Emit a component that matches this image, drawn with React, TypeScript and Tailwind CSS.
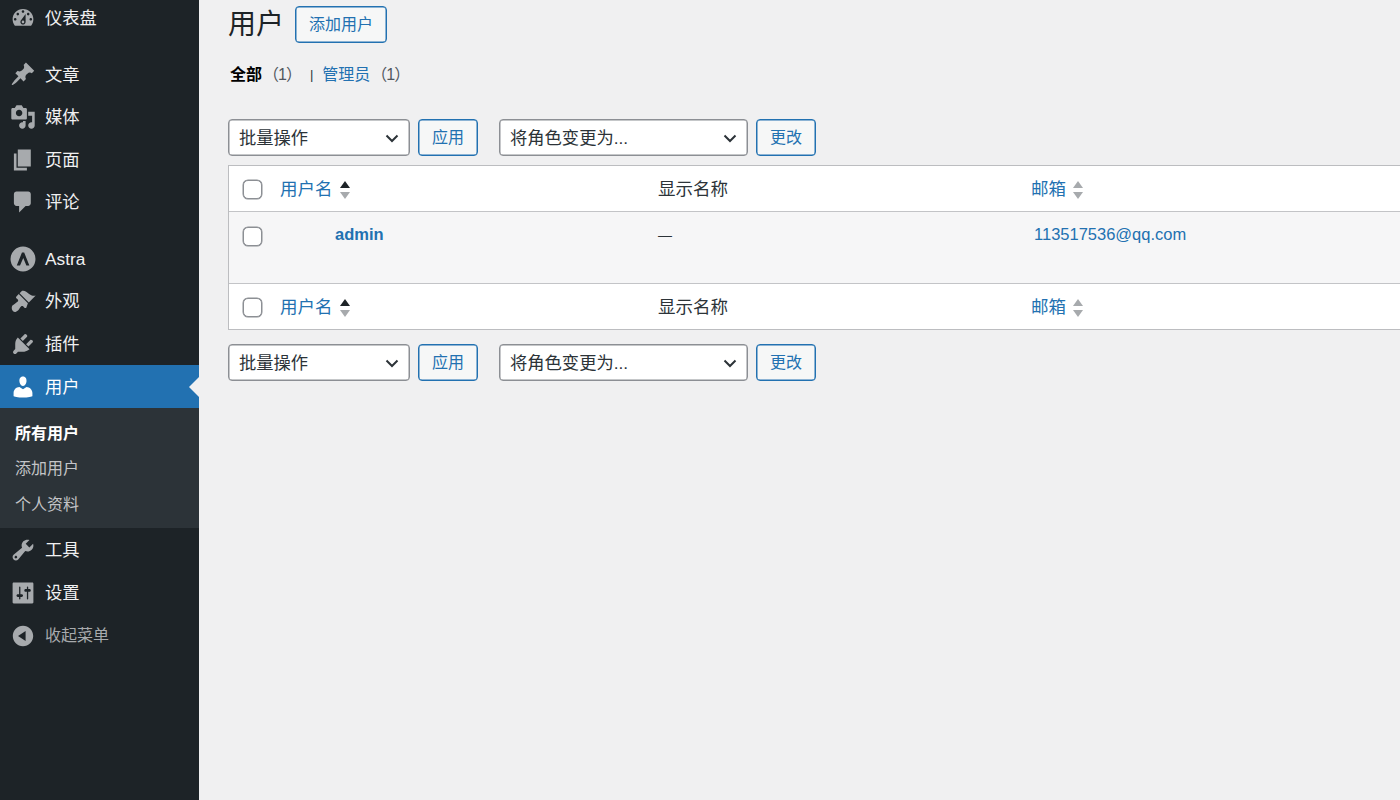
const font = { fontFamily: '"Liberation Sans", "Noto Sans CJK SC", sans-serif' };

const icons: Record<string, string> = {
  dashboard:
    'M3.76 16h12.48c1.1-1.37 1.76-3.11 1.76-5 0-4.42-3.58-8-8-8s-8 3.58-8 8c0 1.89.66 3.63 1.76 5zM10 4c.55 0 1 .45 1 1s-.45 1-1 1-1-.45-1-1 .45-1 1-1zM6 6c.55 0 1 .45 1 1s-.45 1-1 1-1-.45-1-1 .45-1 1-1zm8 0c.55 0 1 .45 1 1s-.45 1-1 1-1-.45-1-1 .45-1 1-1zm-5.37 5.55L12 7v6c0 1.1-.9 2-2 2s-2-.9-2-2c0-.57.24-1.08.63-1.45zM4 10c.55 0 1 .45 1 1s-.45 1-1 1-1-.45-1-1 .45-1 1-1zm12 0c.55 0 1 .45 1 1s-.45 1-1 1-1-.45-1-1 .45-1 1-1zm-5 3c0-.55-.45-1-1-1s-1 .45-1 1 .45 1 1 1 1-.45 1-1z',
  post: 'M10.44 3.02l1.82-1.82 6.36 6.35-1.83 1.82c-1.05-.68-2.48-.57-3.41.36l-.75.75c-.92.93-1.04 2.35-.35 3.41l-1.83 1.82-2.41-2.41-2.8 2.79c-.42.42-3.38 2.71-3.8 2.29s1.86-3.39 2.28-3.81l2.79-2.79L4.1 9.36l1.83-1.82c1.05.69 2.48.57 3.4-.36l.75-.75c.93-.92 1.05-2.35.36-3.41z',
  media:
    'M13 11V4c0-.55-.45-1-1-1h-1.67L9 1H5L3.67 3H2c-.55 0-1 .45-1 1v7c0 .55.45 1 1 1h10c.55 0 1-.45 1-1zM7 4.5c1.38 0 2.5 1.12 2.5 2.5S8.38 9.5 7 9.5 4.5 8.38 4.5 7 5.62 4.5 7 4.5zM14 6h5v10.5c0 1.38-1.12 2.5-2.5 2.5S14 17.88 14 16.5s1.12-2.5 2.5-2.5c.17 0 .34.02.5.05V9h-3V6zm-4 8.05V13h2v3.5c0 1.38-1.12 2.5-2.5 2.5S7 17.88 7 16.5 8.12 14 9.5 14c.17 0 .34.02.5.05z',
  page: 'M6 15V2h10v13H6zm-1 1h8v2H3V5h2v11z',
  comments: 'M5 2h9c1.1 0 2 .9 2 2v7c0 1.1-.9 2-2 2h-2l-5 5v-5H5c-1.1 0-2-.9-2-2V4c0-1.1.9-2 2-2z',
  astra:
    'M10 .4a9.6 9.6 0 1 0 0 19.2A9.6 9.6 0 0 0 10 .4zM9.200 5h1.700l4 10h-2.300L10.200 9.300 7.700 15H5.200z',
  appearance:
    'M14.48 11.06L7.41 3.99l1.5-1.5c.5-.56 2.3-.47 3.51.32 1.21.8 1.43 1.28 2.91 2.1 1.18.64 2.45 1.26 4.45.85zm-.71.71L6.7 4.7 4.93 6.47c-.39.39-.39 1.02 0 1.41l1.06 1.06c.39.39.39 1.03 0 1.42-.6.6-1.43 1.11-2.21 1.69-.35.26-.7.53-1.01.84C1.43 13.23.91 15.24 1.84 17.18c.92 1.94 2.95 1.44 4.26.12.31-.31.58-.66.84-1.01.58-.78 1.09-1.61 1.69-2.21.39-.39 1.03-.39 1.42 0l1.06 1.06c.39.39 1.02.39 1.41 0z',
  plugins:
    'M13.11 4.36L9.87 7.6 8 5.73l3.24-3.24c.35-.34 1.05-.2 1.56.32.52.51.66 1.21.31 1.55zm-8 1.77l.91-1.12 9.01 9.01-1.19.84c-.71.71-2.63 1.16-3.82 1.16H6.14L4.9 17.26c-.59.59-1.54.59-2.12 0-.59-.58-.59-1.53 0-2.12l1.24-1.24v-3.88c0-1.13.4-3.19 1.09-3.89zm7.26 3.97l3.24-3.24c.34-.35 1.04-.21 1.55.31.52.51.66 1.21.31 1.55l-3.24 3.25z',
  users:
    'M10 9.25c-2.27 0-2.73-3.44-2.73-3.44C7 4.02 7.82 2 9.97 2c2.16 0 2.98 2.02 2.71 3.81 0 0-.41 3.44-2.68 3.44zm0 2.57L12.72 10c2.39 0 4.52 2.33 4.52 4.53v2.49s-3.65 1.13-7.24 1.13c-3.65 0-7.24-1.13-7.24-1.13v-2.49c0-2.25 1.94-4.48 4.47-4.48z',
  tools:
    'M16.68 9.77c-1.34 1.34-3.3 1.67-4.95.99l-5.41 6.52c-.99.99-2.59.99-3.58 0s-.99-2.59 0-3.57l6.52-5.42c-.68-1.65-.35-3.61.99-4.95 1.28-1.28 3.12-1.62 4.72-1.06l-2.89 2.89 2.82 2.82 2.86-2.87c.53 1.58.18 3.39-1.08 4.65zM3.81 16.21c.4.39 1.04.39 1.43 0 .4-.4.4-1.04 0-1.43-.39-.4-1.03-.4-1.43 0-.39.39-.39 1.03 0 1.43z',
  settings:
    'M18 17.2V2.8c0-.4-.4-.8-.8-.8H2.800c-.4 0-.8.4-.8.8v14.400c0 .4.4.8.8.8h14.400c.4 0 .8-.4.8-.8zM8 11h1c.55 0 1 .45 1 1s-.45 1-1 1H8v1.500c0 .28-.22.5-.5.5s-.5-.22-.5-.5V13H6c-.55 0-1-.45-1-1s.45-1 1-1h1V5.500c0-.28.22-.5.5-.5s.5.22.5.5V11zm5-2h-1c-.55 0-1-.45-1-1s.45-1 1-1h1V5.500c0-.28.22-.5.5-.5s.5.22.5.5V7h1c.55 0 1 .45 1 1s-.45 1-1 1h-1v5.500c0 .28-.22.5-.5.5s-.5-.22-.5-.5V9z',
  collapse:
    'M10 2.16c4.33 0 7.84 3.51 7.84 7.84s-3.51 7.84-7.84 7.84S2.16 14.33 2.16 10 5.67 2.16 10 2.16zm2 11.72V6.12L6.18 9.97z',
};

function MenuIcon({ name, className }: { name: string; className?: string }) {
  return (
    <svg viewBox="0 0 20 20" className={`h-[26px] w-[26px] shrink-0 ${className ?? 'text-[#a7aaad]'}`}>
      <path fill="currentColor" fillRule="evenodd" d={icons[name]} />
    </svg>
  );
}

function MenuItem({ icon, label, active }: { icon: string; label: string; active?: boolean }) {
  return (
    <div
      className={`relative flex h-[42.67px] items-center pl-[10px] text-[17.3px] ${
        active ? 'bg-[#2271b1] text-white' : 'text-[#f0f0f1]'
      }`}
    >
      <MenuIcon name={icon} className={active ? 'text-white' : 'text-[#a7aaad]'} />
      <span className="ml-[9px] pt-[2px]">{label}</span>
      {active && (
        <span className="absolute right-0 top-1/2 -mt-[10px] border-y-[10px] border-r-[10px] border-y-transparent border-r-[#f0f0f1]" />
      )}
    </div>
  );
}

function Sidebar() {
  return (
    <aside className="w-[199px] shrink-0 bg-[#1d2327]">
      <div className="-mt-[3px]">
        <MenuItem icon="dashboard" label="仪表盘" />
      </div>
      <div className="mt-[13.5px]">
        <MenuItem icon="post" label="文章" />
        <MenuItem icon="media" label="媒体" />
        <MenuItem icon="page" label="页面" />
        <MenuItem icon="comments" label="评论" />
      </div>
      <div className="mt-[13.5px]">
        <MenuItem icon="astra" label="Astra" />
        <MenuItem icon="appearance" label="外观" />
        <MenuItem icon="plugins" label="插件" />
        <MenuItem icon="users" label="用户" active />
      </div>
      <div className="flex h-[120px] flex-col justify-center gap-[12px] bg-[#2c3338] pl-[15px] pt-[2px] text-[16px] leading-[23.5px] text-[#c3c4c7]">
        <div className="font-bold text-white">所有用户</div>
        <div>添加用户</div>
        <div>个人资料</div>
      </div>
      <div className="mt-[1px]">
        <MenuItem icon="tools" label="工具" />
        <MenuItem icon="settings" label="设置" />
        <div className="flex h-[42.67px] items-center pl-[10px] text-[16px] text-[#a7aaad]">
          <MenuIcon name="collapse" />
          <span className="ml-[9px]">收起菜单</span>
        </div>
      </div>
    </aside>
  );
}

function BlueButton({ label, wide }: { label: string; wide?: boolean }) {
  return (
    <div
      className={`flex h-[37px] items-center justify-center rounded-[4px] border border-[#2271b1] bg-[#f6f7f7] pt-[1px] text-[16px] text-[#2271b1] shadow-[inset_0_0_0_0.5px_#2271b1] ${
        wide ? 'w-[92px]' : 'w-[60px]'
      }`}
    >
      {label}
    </div>
  );
}

function Select({ label, width }: { label: string; width: string }) {
  return (
    <div
      className={`flex h-[37px] items-center justify-between rounded-[4px] border border-[#8c8f94] bg-white pl-[10px] pr-[9px] text-[17.3px] text-[#2c3338] shadow-[inset_0_0_0_0.5px_#8c8f94] ${width}`}
    >
      <span className="pt-[2px]">{label}</span>
      <svg viewBox="0 0 16 16" className="h-[16px] w-[16px]" fill="none" stroke="#2c3338" strokeWidth="2">
        <path d="M2.5 5.500 8 11l5.500-5.500" />
      </svg>
    </div>
  );
}

function Toolbar() {
  return (
    <div className="flex items-center">
      <Select label="批量操作" width="w-[182px]" />
      <div className="ml-[8px]">
        <BlueButton label="应用" />
      </div>
      <div className="ml-[21px]">
        <Select label="将角色变更为..." width="w-[249px]" />
      </div>
      <div className="ml-[8px]">
        <BlueButton label="更改" />
      </div>
    </div>
  );
}

function Checkbox() {
  return (
    <span className="ml-[1px] block h-[19px] w-[19px] rounded-[5px] border border-[#8c8f94] bg-white shadow-[0_0_0_0.5px_#8c8f94]" />
  );
}

function SortArrows({ sorted }: { sorted?: boolean }) {
  return (
    <svg viewBox="0 0 12 20" className="ml-[6px] h-[20px] w-[12px]">
      <path d="M6 1l5 7H1z" fill={sorted ? '#1d2327' : '#a7aaad'} />
      <path d="M6 19l5-7H1z" fill="#a7aaad" />
    </svg>
  );
}

function HeadRow({ borderClass }: { borderClass: string }) {
  return (
    <div className={`grid h-[46px] grid-cols-[51px_378px_373px_1fr] items-center bg-white pt-[2px] text-[17.5px] ${borderClass}`}>
      <div className="pl-[13px]">
        <Checkbox />
      </div>
      <div className="flex items-center text-[#2271b1]">
        用户名
        <SortArrows sorted />
      </div>
      <div className="text-[#2c3338]">显示名称</div>
      <div className="flex items-center text-[#2271b1]">
        邮箱
        <SortArrows />
      </div>
    </div>
  );
}

export default function App() {
  return (
    <div className="flex h-[800px] w-[1400px] overflow-hidden bg-[#f0f0f1] text-[16.5px]" style={font}>
      <Sidebar />
      <main className="flex-1 pl-[29px]">
        <div className="flex items-center pt-[6px]">
          <h1 className="text-[28px] font-normal leading-[37px] text-[#1d2327]">用户</h1>
          <div className="ml-[11px]">
            <BlueButton label="添加用户" wide />
          </div>
        </div>

        <div className="mt-[20px] flex h-[24px] items-center text-[16px] text-[#50575e]">
          <span className="ml-[2px] font-bold text-black">全部</span>
          <span className="ml-[1px] tracking-[-1px]">（1）</span>
          <span className="ml-[9px] text-[13px] text-[#2c3338]">|</span>
          <span className="ml-[9px] text-[#2271b1]">管理员</span>
          <span className="ml-[1px] tracking-[-1px]">（1）</span>
        </div>

        <div className="mt-[32px]">
          <Toolbar />
        </div>

        <div className="mt-[9px] w-[1190px] border border-[#bcbdc0]">
          <HeadRow borderClass="border-b border-[#c3c4c7]" />
          <div className="grid h-[71px] grid-cols-[51px_378px_373px_1fr] bg-[#f6f6f7] pt-[12px] leading-[20px]">
            <div className="pl-[13px] pt-[3px]">
              <Checkbox />
            </div>
            <div className="pl-[55px] font-bold text-[#2271b1]">admin</div>
            <div className="pt-[1px] text-[14px] text-[#2c3338]">—</div>
            <div className="pl-[3px] text-[#2271b1]">113517536@qq.com</div>
          </div>
          <HeadRow borderClass="border-t border-[#c3c4c7]" />
        </div>

        <div className="mt-[14px]">
          <Toolbar />
        </div>
      </main>
    </div>
  );
}
